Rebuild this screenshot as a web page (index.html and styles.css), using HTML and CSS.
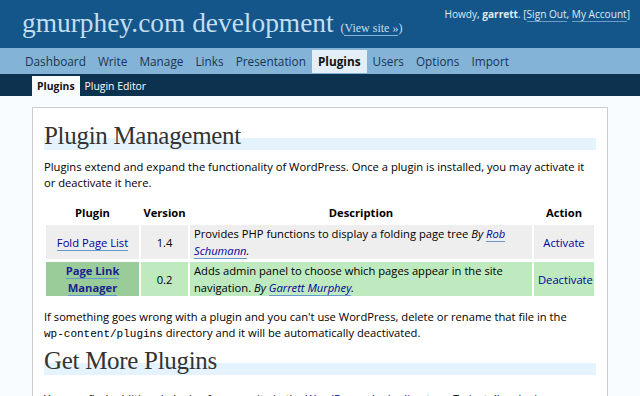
FILE: index.html
```html
<!DOCTYPE html>
<html lang="en">
<head>
    <meta charset="UTF-8">
    <title>Plugin Management &lsaquo; gmurphey.com development &#8212; WordPress</title>
    <link rel="stylesheet" href="styles.css">
</head>
<body>
    <div class="wphead">
        <h1>gmurphey.com development <span class="viewsite">(<a href="#">View site &raquo;</a>)</span></h1>
        <div class="user-info">Howdy, <strong>garrett</strong>. [<a href="#">Sign Out</a>, <a href="#">My Account</a>]</div>
    </div>

    <ul class="adminmenu">
        <li><a href="#">Dashboard</a></li>
        <li><a href="#">Write</a></li>
        <li><a href="#">Manage</a></li>
        <li><a href="#">Links</a></li>
        <li><a href="#">Presentation</a></li>
        <li><a href="#" class="current">Plugins</a></li>
        <li><a href="#">Users</a></li>
        <li><a href="#">Options</a></li>
        <li><a href="#">Import</a></li>
    </ul>

    <ul class="submenu">
        <li><a href="#" class="current">Plugins</a></li>
        <li><a href="#">Plugin Editor</a></li>
    </ul>

    <div class="wrap">
        <h2>Plugin Management</h2>
        <p>Plugins extend and expand the functionality of WordPress. Once a plugin is installed, you may activate it or deactivate it here.</p>

        <table class="plugins">
            <colgroup>
                <col class="col-name">
                <col class="col-version">
                <col class="col-desc">
                <col class="col-action">
            </colgroup>
            <thead>
                <tr>
                    <th>Plugin</th>
                    <th>Version</th>
                    <th>Description</th>
                    <th>Action</th>
                </tr>
            </thead>
            <tbody>
                <tr class="alternate">
                    <td class="name"><a href="#">Fold Page List</a></td>
                    <td class="vers">1.4</td>
                    <td class="desc">Provides PHP functions to display a folding page tree <cite>By <a href="#">Rob Schumann</a>.</cite></td>
                    <td class="togl"><a href="#" class="edit">Activate</a></td>
                </tr>
                <tr class="active">
                    <td class="name"><a href="#">Page Link Manager</a></td>
                    <td class="vers">0.2</td>
                    <td class="desc">Adds admin panel to choose which pages appear in the site navigation. <cite>By <a href="#">Garrett Murphey</a>.</cite></td>
                    <td class="togl"><a href="#" class="delete">Deactivate</a></td>
                </tr>
            </tbody>
        </table>

        <p class="after-table">If something goes wrong with a plugin and you can't use WordPress, delete or rename that file in the <code>wp-content/plugins</code> directory and it will be automatically deactivated.</p>

        <h2 class="more">Get More Plugins</h2>
        <p class="after-more">You can find additional plugins for your site in the <a href="#">WordPress plugin directory</a>. To install a plugin you generally just need to upload the plugin file into your <code>wp-content/plugins</code> directory. Once a plugin is uploaded, you may activate it here.</p>
    </div>
</body>
</html>
```

FILE: styles.css
```css
* {
    margin: 0;
    padding: 0;
    box-sizing: border-box;
}

body {
    background-color: #f9fcfe;
    color: #000;
    font-family: "Open Sans", sans-serif;
    font-size: 11.2px;
}

a {
    color: #00019b;
    text-decoration: none;
    border-bottom: 1px solid #69c;
}

/* header */

.wphead {
    background-color: #14568a;
    height: 48px;
    display: flex;
    justify-content: space-between;
    padding: 0 10px 0 22px;
}

.wphead h1 {
    font: normal 27.4px/30px "Liberation Serif", serif;
    color: #c3def1;
    padding-top: 8px;
    white-space: nowrap;
}

.viewsite {
    font-size: 12px;
}

.viewsite a {
    color: #c3def1;
    border-bottom-color: #83b4d8;
}

.user-info {
    color: #dfeaf4;
    font-size: 10.1px;
    padding-top: 7px;
}

.user-info a {
    color: #dfeaf4;
    border-bottom-color: #6a9cc4;
}

/* menus */

.adminmenu {
    list-style: none;
    display: flex;
    background-color: #83b4d8;
    height: 26px;
    padding: 2px 0 0 19px;
}

.adminmenu a {
    display: block;
    color: #1b3550;
    font-size: 11.8px;
    line-height: 23px;
    padding: 0 6px;
    border-bottom: none;
}

.adminmenu a.current {
    background-color: #e3eef7;
    color: #111;
    font-weight: bold;
}

.submenu {
    list-style: none;
    display: flex;
    background-color: #0d324f;
    height: 22px;
    padding: 2px 0 0 32px;
}

.submenu a {
    display: block;
    color: #fff;
    font-size: 10.4px;
    line-height: 20px;
    padding: 0 5px;
    border-bottom: none;
}

.submenu a.current {
    background-color: #f9fcfe;
    color: #111;
    font-weight: bold;
}

/* content */

.wrap {
    background-color: #fff;
    border: 1px solid #ccc;
    margin: 11px 32px 0;
    padding: 0 11px 20px;
}

.wrap h2 {
    font: normal 25px/5px "Liberation Serif", serif;
    letter-spacing: -0.3px;
    color: #333;
    border-bottom: 12px solid #e5f3ff;
    margin-top: 25px;
}

.wrap p {
    line-height: 16px;
    margin-top: 9px;
}

code {
    font-family: "Liberation Mono", monospace;
    font-size: 11px;
    white-space: nowrap;
}

.plugins {
    width: 100%;
    table-layout: fixed;
    border-spacing: 2px 3px;
    margin-top: 10px;
    line-height: 17px;
}

.col-name { width: 93px; }
.col-version { width: 47px; }
.col-action { width: 60px; }

.plugins th {
    font-weight: bold;
    text-align: center;
    line-height: 18px;
}

.plugins td {
    padding: 0 4px;
    vertical-align: middle;
}

.plugins .name,
.plugins .vers,
.plugins .togl {
    text-align: center;
}

.plugins .togl a {
    border-bottom: none;
}

.alternate td {
    background-color: #eee;
}

.active td {
    background-color: #bfe9bf;
}

.active .name {
    background-color: #9c9;
    font-weight: bold;
}

.active .name a {
    color: #1a2390;
}

.wrap p.after-table {
    margin-top: 10px;
}

.wrap h2.more {
    margin-top: 16px;
}

.wrap p.after-more {
    margin-top: 16px;
}
```
